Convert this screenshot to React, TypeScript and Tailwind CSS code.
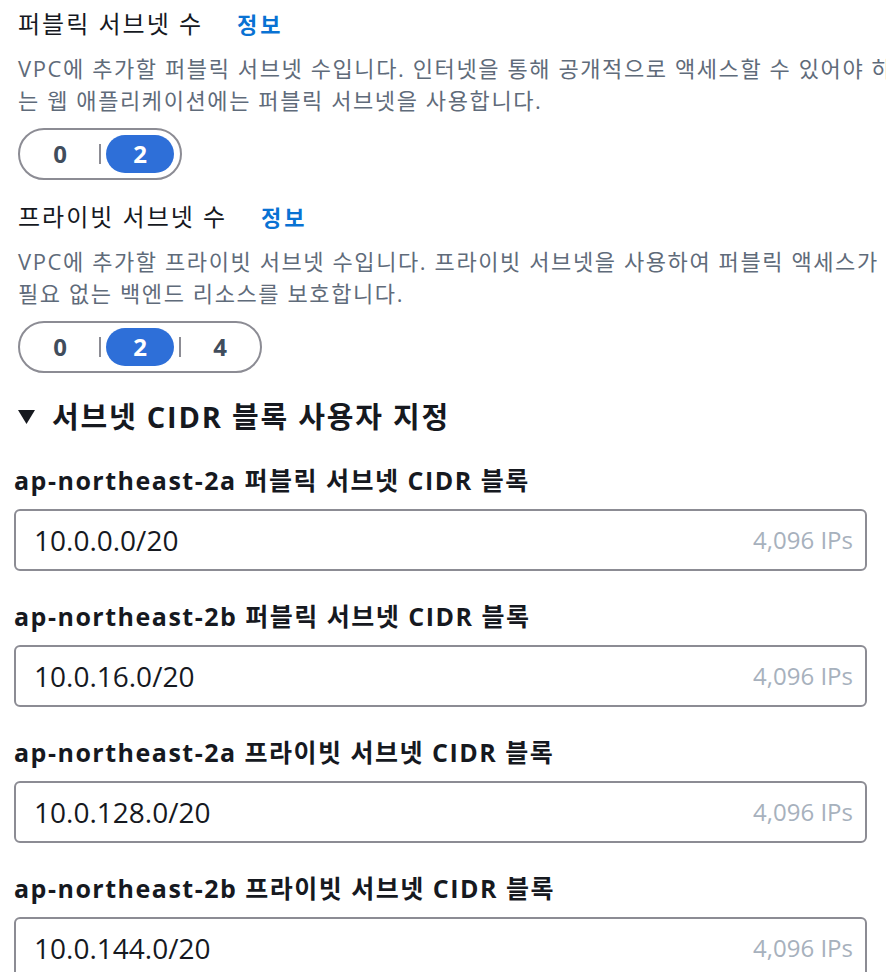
import React from 'react';

const font = { fontFamily: '"Open Sans", "Noto Sans CJK KR", sans-serif' };

interface SegProps {
  options: string[];
  selected: string;
}

const Segmented: React.FC<SegProps> = ({ options, selected }) => (
  <div className="inline-flex items-center h-[52px] rounded-full border-2 border-[#8c8c94] px-[6px] bg-white">
    {options.map((opt, i) => (
      <React.Fragment key={opt}>
        {i > 0 && <span className="w-[2px] h-[20px] bg-[#8c8c94] mx-[5px]" />}
        <span
          className={`h-[38px] w-[68px] flex items-center justify-center rounded-full text-[24px] font-bold ${
            opt === selected ? 'bg-[#2e6fd8] text-white' : 'text-[#414d5c]'
          }`}
        >
          {opt}
        </span>
      </React.Fragment>
    ))}
  </div>
);

interface FieldProps {
  label: string;
  value: string;
}

const CidrField: React.FC<FieldProps> = ({ label, value }) => (
  <div className="flex flex-col">
    <div className="text-[25px] leading-[30px] tracking-[1.5px] font-bold text-[#16191f] whitespace-nowrap">
      {label}
    </div>
    <div className="mt-[14px] h-[62px] w-[853px] border-2 border-[#8c8c94] rounded-[6px] flex items-center justify-between pl-[18px] pr-[12px]">
      <span className="text-[28px] text-[#16191f]">{value}</span>
      <span className="text-[24px] text-[#a7b1bd]">4,096 IPs</span>
    </div>
  </div>
);

export default function App() {
  const fields = [
    { label: 'ap-northeast-2a 퍼블릭 서브넷 CIDR 블록', value: '10.0.0.0/20' },
    { label: 'ap-northeast-2b 퍼블릭 서브넷 CIDR 블록', value: '10.0.16.0/20' },
    { label: 'ap-northeast-2a 프라이빗 서브넷 CIDR 블록', value: '10.0.128.0/20' },
    { label: 'ap-northeast-2b 프라이빗 서브넷 CIDR 블록', value: '10.0.144.0/20' },
  ];

  return (
    <div className="w-[886px] h-[972px] overflow-hidden bg-white" style={font}>
      <div className="pl-[14px] pt-[9px]">
        <div className="pl-[4px]">
          <div className="flex items-center gap-[34px] text-[24px] leading-[30px] tracking-[2px]">
            <span className="text-[#16191f]">퍼블릭 서브넷 수</span>
            <span className="text-[#0972d3] font-bold text-[22px] tracking-[3px]">정보</span>
          </div>
          <div className="mt-[13px] text-[22px] leading-[32px] tracking-[1.6px] text-[#5f6b7a] whitespace-nowrap">
            <div>VPC에 추가할 퍼블릭 서브넷 수입니다. 인터넷을 통해 공개적으로 액세스할 수 있어야 하</div>
            <div>는 웹 애플리케이션에는 퍼블릭 서브넷을 사용합니다.</div>
          </div>
          <div className="mt-[12px]">
            <Segmented options={['0', '2']} selected="2" />
          </div>

          <div className="mt-[22px] flex items-center gap-[34px] text-[24px] leading-[30px] tracking-[2px]">
            <span className="text-[#16191f]">프라이빗 서브넷 수</span>
            <span className="text-[#0972d3] font-bold text-[22px] tracking-[3px]">정보</span>
          </div>
          <div className="mt-[13px] text-[22px] leading-[32px] tracking-[1.6px] text-[#5f6b7a] whitespace-nowrap">
            <div>VPC에 추가할 프라이빗 서브넷 수입니다. 프라이빗 서브넷을 사용하여 퍼블릭 액세스가</div>
            <div>필요 없는 백엔드 리소스를 보호합니다.</div>
          </div>
          <div className="mt-[12px]">
            <Segmented options={['0', '2', '4']} selected="2" />
          </div>

          <div className="mt-[26px] flex items-center gap-[17px] text-[29px] leading-[36px] tracking-[1.8px] font-bold text-[#16191f]">
            <svg width="17" height="14" viewBox="0 0 17 14" aria-hidden="true">
              <path d="M0 0 H17 L8.5 14 Z" fill="#16191f" />
            </svg>
            <span>서브넷 CIDR 블록 사용자 지정</span>
          </div>
        </div>

        <div className="mt-[30px] flex flex-col gap-[30px]">
          {fields.map((f) => (
            <CidrField key={f.value} label={f.label} value={f.value} />
          ))}
        </div>
      </div>
    </div>
  );
}
